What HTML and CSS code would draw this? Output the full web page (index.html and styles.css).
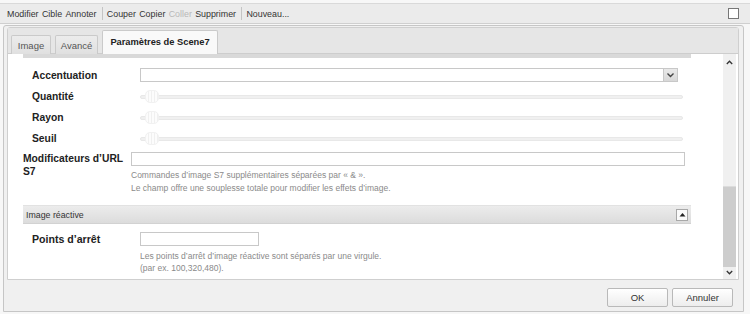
FILE: index.html
```html
<!DOCTYPE html>
<html lang="fr">
<head>
<meta charset="utf-8">
<title>Paramètres de Scene7</title>
<link rel="stylesheet" href="styles.css">
</head>
<body>
<div class="toolbar">
  <span class="tb">Modifier</span><span class="tb">Cible</span><span class="tb">Annoter</span><span class="sep"></span>
  <span class="tb">Couper</span><span class="tb">Copier</span><span class="tb dis">Coller</span><span class="tb">Supprimer</span><span class="sep"></span>
  <span class="tb">Nouveau...</span>
  <span class="spacer"></span>
  <span class="check"></span>
</div>
<div class="dialog">
  <div class="tabpanel">
    <div class="tabs">
      <div class="tab t-image">Image</div>
      <div class="tab t-adv">Avancé</div>
      <div class="tab active">Paramètres de Scene7</div>
    </div>
    <div class="body">
      <div class="content">
        <div class="inner">
          <div class="band"></div>
          <div class="group">
            <div class="row">
              <div class="label">Accentuation</div>
              <div class="select"><span class="ddbtn"><svg width="9" height="6" viewBox="0 0 9 6"><path d="M1.5 1.5 L4.5 4.5 L7.5 1.5" fill="none" stroke="#444" stroke-width="1.4"/></svg></span></div>
            </div>
            <div class="row">
              <div class="label">Quantité</div>
              <div class="slider"><span class="thumb"></span></div>
            </div>
            <div class="row">
              <div class="label">Rayon</div>
              <div class="slider"><span class="thumb"></span></div>
            </div>
            <div class="row">
              <div class="label">Seuil</div>
              <div class="slider"><span class="thumb"></span></div>
            </div>
          </div>
          <div class="frow">
            <div class="label ml">Modificateurs d’URL S7</div>
            <div class="fcol">
              <div class="input wide"></div>
              <div class="help">Commandes d’image S7 supplémentaires séparées par « &amp; ».<br>Le champ offre une souplesse totale pour modifier les effets d’image.</div>
            </div>
          </div>
          <div class="header">
            <span>Image réactive</span>
            <span class="collapse"><svg width="7" height="5" viewBox="0 0 7 5"><path d="M0.5 4.5 L3.5 1 L6.5 4.5 Z" fill="#222"/></svg></span>
          </div>
          <div class="frow pts">
            <div class="label big">Points d’arrêt</div>
            <div class="fcol">
              <div class="input small"></div>
              <div class="help h2">Les points d’arrêt d’image réactive sont séparés par une virgule.<br>(par ex. 100,320,480).</div>
            </div>
          </div>
        </div>
      </div>
      <div class="scrollbar">
        <svg class="sarrow up" width="7" height="5" viewBox="0 0 7 5"><path d="M0.8 4 L3.5 1.2 L6.2 4" fill="none" stroke="#333" stroke-width="1.3"/></svg>
        <div class="strack"><div class="sthumb"></div></div>
        <svg class="sarrow" width="7" height="5" viewBox="0 0 7 5"><path d="M0.8 1 L3.5 3.8 L6.2 1" fill="none" stroke="#333" stroke-width="1.3"/></svg>
      </div>
    </div>
  </div>
  <div class="footer">
    <button class="btn">OK</button>
    <button class="btn">Annuler</button>
  </div>
</div>
</body>
</html>
```

FILE: styles.css
```css
html, body {
  margin: 0;
  padding: 0;
}
body {
  width: 750px;
  height: 314px;
  overflow: hidden;
  background: #f7f7f7;
  font-family: "Liberation Sans", Arial, sans-serif;
  color: #222;
}
.toolbar {
  margin-top: 3px;
  height: 19px;
  border-top: 1px solid #d9d9d9;
  border-bottom: 1px solid #cfcfcf;
  background: #ebebeb;
  display: flex;
  align-items: center;
  padding-left: 7px;
  padding-right: 11px;
  font-size: 8.9px;
  color: #333;
}
.tb { margin-right: 3.3px; }
.tb.dis { color: #b8b8b8; }
.sep {
  width: 1px;
  height: 13px;
  background: #c4c4c4;
  margin: 0 4px 0 2px;
}
.spacer { flex: 1; }
.check {
  width: 9px;
  height: 9px;
  border: 1px solid #777;
  background: #fff;
}
.dialog {
  margin: 1px 6px 0 3px;
  height: 285px;
  border: 1px solid #c6c6c6;
  border-radius: 3px 3px 0 0;
  background: #f0f0f0;
  display: flex;
  flex-direction: column;
}
.tabpanel {
  margin: 1px 4px 0 3px;
  height: 251px;
  border: 1px solid #cfcfcf;
  border-radius: 3px 3px 0 0;
  display: flex;
  flex-direction: column;
  background: #fff;
}
.tabs {
  height: 25px;
  background: #e6e6e6;
  border-bottom: 1px solid #cdcdcd;
  display: flex;
  align-items: flex-end;
  padding-left: 3px;
  gap: 4px;
}
.tab {
  height: 19px;
  box-sizing: border-box;
  border: 1px solid #cacaca;
  border-bottom: none;
  border-radius: 2px 2px 0 0;
  background: linear-gradient(#ececec, #e0e0e0);
  font-size: 9.5px;
  color: #555;
  display: flex;
  align-items: center;
  justify-content: center;
  margin-bottom: -1px;
}
.t-image { width: 40px; }
.t-adv { width: 43px; }
.tab.active {
  width: 116px;
  height: 24px;
  background: #f9f9f9;
  color: #222;
  font-weight: bold;
  font-size: 9.3px;
  padding-bottom: 1px;
}
.body {
  flex: 1;
  display: flex;
  padding-left: 3px;
  padding-right: 1px;
  background: #fff;
}
.content {
  width: 712px;
  background: #fff;
}
.inner {
  margin-left: 12px;
  width: 668px;
}
.band {
  height: 4px;
  background: #d9d9d9;
}
.group {
  margin-top: 7px;
  padding-left: 9px;
}
.row {
  height: 21px;
  display: flex;
  align-items: center;
}
.label {
  width: 108px;
  flex: none;
  font-weight: bold;
  font-size: 10.3px;
  color: #222;
}
.select {
  width: 536px;
  height: 12px;
  border: 1px solid #c8c8c8;
  background: #fff;
  display: flex;
  justify-content: flex-end;
  margin-top: -1px;
}
.ddbtn {
  width: 13px;
  height: 12px;
  border-left: 1px solid #c8c8c8;
  background: linear-gradient(#e9e9e9, #d8d8d8);
  display: flex;
  align-items: center;
  justify-content: center;
}
.slider {
  position: relative;
  width: 541px;
  height: 2px;
  border: 1px solid #e8e8e8;
  background: #f0f0f0;
  border-radius: 2px;
}
.thumb {
  position: absolute;
  left: 4px;
  top: -6px;
  width: 12px;
  height: 11px;
  border: 1px solid #f1f1f1;
  border-radius: 5px;
  background: repeating-linear-gradient(90deg, #fcfcfc 0 2px, #f0f0f0 2px 3px);
}
.frow {
  display: flex;
  margin-top: 3px;
}
.label.ml {
  line-height: 13px;
  padding-top: 0;
}
.fcol {
  display: flex;
  flex-direction: column;
}
.input {
  height: 12px;
  border: 1px solid #c8c8c8;
  background: #fff;
}
.input.wide { width: 552px; }
.input.small { width: 117px; }
.help {
  margin-top: 3px;
  font-size: 8.5px;
  line-height: 13px;
  color: #8a8a8a;
}
.help.h2 {
  margin-top: 4px;
  line-height: 12px;
}
.header {
  margin-top: 10px;
  height: 19px;
  box-sizing: border-box;
  border-top: 1px solid #e2e2e2;
  border-bottom: 1px solid #d2d2d2;
  background: linear-gradient(#ececec, #dcdcdc);
  display: flex;
  align-items: center;
  justify-content: space-between;
  padding: 0 3px 0 3px;
  font-size: 8.8px;
  color: #333;
}
.collapse {
  width: 10px;
  height: 10px;
  border: 1px solid #a8a8a8;
  background: #fafafa;
  display: flex;
  align-items: center;
  justify-content: center;
  margin-right: 0;
}
.frow.pts {
  margin-top: 8px;
  padding-left: 9px;
}
.label.big {
  font-size: 10.6px;
  line-height: 14px;
}
.scrollbar {
  width: 13px;
  background: #f0f0f0;
  display: flex;
  flex-direction: column;
  align-items: center;
}
.sarrow { flex: none; }
.sarrow.up { margin-top: 6px; }
.strack {
  flex: 1;
  width: 13px;
  display: flex;
  flex-direction: column;
  justify-content: flex-end;
  padding-bottom: 3px;
}
.sthumb {
  height: 80px;
  background: #cdcdcd;
  border-top: 1px solid #dcdcdc;
}
.sarrow:last-child { margin-bottom: 4px; }
.footer {
  flex: 1;
  display: flex;
  justify-content: flex-end;
  align-items: flex-start;
  padding-top: 8px;
  padding-right: 10px;
  gap: 4px;
}
.btn {
  width: 61px;
  height: 19px;
  border: 1px solid #b9b9b9;
  border-radius: 2px;
  background: linear-gradient(#ffffff, #ededed);
  font-family: "Liberation Sans", Arial, sans-serif;
  font-size: 9.5px;
  color: #333;
  padding: 0;
}
```
